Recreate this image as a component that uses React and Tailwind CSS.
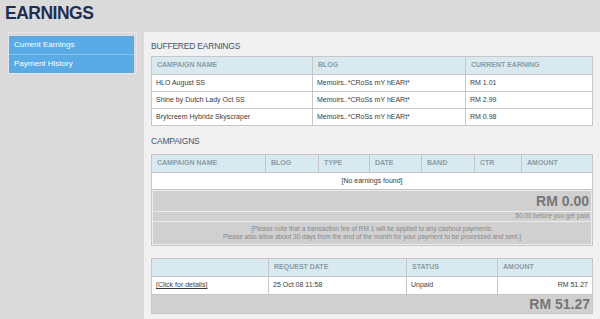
import React from "react";

const buffered = [
  { name: "HLO August SS", blog: "Memoirs..*CRoSs mY hEARt*", amount: "RM 1.01" },
  { name: "Shine by Dutch Lady Oct SS", blog: "Memoirs..*CRoSs mY hEARt*", amount: "RM 2.99" },
  { name: "Brylcreem Hybridz Skyscraper", blog: "Memoirs..*CRoSs mY hEARt*", amount: "RM 0.98" },
];

const th = "h-[18px] border border-[#c6c6c6] bg-[#d8eaf0] px-[5px] text-left align-middle text-[7px] font-bold text-[#8a9ca6]";
const td = "h-[17px] border border-[#c6c6c6] bg-white px-[4px] align-middle text-[7px] text-[#3a3a3a]";

const App = () => {
  return (
    <div className="min-h-[319px] w-[600px] bg-[#dadada] font-['Liberation_Sans',Arial,sans-serif]">
      <div className="h-[32px] px-[5px] pt-[1px]">
        <h1 className="text-[17.5px] font-bold leading-[24px] tracking-[-0.5px] text-[#1f2f52]">EARNINGS</h1>
      </div>

      <div className="flex">
        <div className="ml-[8px] mr-[7px] w-[129px] shrink-0 self-start border border-[#e6e6e6] pr-[2px] pt-[3px]">
          <div className="flex h-[18px] items-center bg-[#5aaae6] pl-[5px] text-[8px] text-white">Current Earnings</div>
          <div className="h-px bg-[#8cc4ee]"></div>
          <div className="flex h-[18px] items-center bg-[#5aaae6] pl-[5px] text-[8px] text-white">Payment History</div>
        </div>

        <div className="min-h-[287px] flex-1 bg-[#f1f1f1] pl-[7px] pr-[8px] pt-[7px]">
          <h2 className="h-[17px] text-[8.5px] leading-[14px] tracking-[-0.2px] text-[#3b5670]">BUFFERED EARNINGS</h2>
          <table className="w-[441px] table-fixed border-collapse">
            <colgroup>
              <col className="w-[161px]" />
              <col className="w-[153px]" />
              <col className="w-[127px]" />
            </colgroup>
            <thead>
              <tr>
                <th className={th}>CAMPAIGN NAME</th>
                <th className={th}>BLOG</th>
                <th className={th}>CURRENT EARNING</th>
              </tr>
            </thead>
            <tbody>
              {buffered.map((row) => (
                <tr key={row.name}>
                  <td className={td}>{row.name}</td>
                  <td className={td}>{row.blog}</td>
                  <td className={td}>{row.amount}</td>
                </tr>
              ))}
            </tbody>
          </table>

          <h2 className="mt-[7px] h-[21px] text-[8.5px] leading-[17px] tracking-[-0.2px] text-[#3b5670]">CAMPAIGNS</h2>
          <table className="w-[441px] table-fixed border-collapse">
            <colgroup>
              <col className="w-[114px]" />
              <col className="w-[53px]" />
              <col className="w-[51px]" />
              <col className="w-[52px]" />
              <col className="w-[53px]" />
              <col className="w-[47px]" />
              <col className="w-[71px]" />
            </colgroup>
            <thead>
              <tr>
                <th className={th}>CAMPAIGN NAME</th>
                <th className={th}>BLOG</th>
                <th className={th}>TYPE</th>
                <th className={th}>DATE</th>
                <th className={th}>BAND</th>
                <th className={th}>CTR</th>
                <th className={th}>AMOUNT</th>
              </tr>
            </thead>
            <tbody>
              <tr>
                <td colSpan={7} className={`${td} text-center`}>[No earnings found]</td>
              </tr>
              <tr>
                <td colSpan={7} className="border border-[#c6c6c6] bg-[#c8c8c8] p-0">
                  <div className="border border-[#ececec] bg-[#d0d0d0]">
                    <div className="flex h-[20px] items-center justify-end pr-[2px] text-[14px] font-bold leading-none text-[#777]">RM 0.00</div>
                    <div className="h-px bg-[#ececec]"></div>
                    <div className="flex h-[9px] items-center justify-end pr-[2px] text-[6.5px] leading-none text-[#888]">50.00 before you get paid</div>
                    <div className="h-px bg-[#ececec]"></div>
                    <div className="flex h-[22px] flex-col items-center justify-center text-[6.5px] leading-[8px] text-[#888]">
                      <span>[Please note that a transaction fee of RM 1 will be applied to any cashout payments.</span>
                      <span>Please also allow about 30 days from the end of the month for your payment to be processed and sent.]</span>
                    </div>
                  </div>
                </td>
              </tr>
            </tbody>
          </table>

          <table className="mt-[12px] w-[441px] table-fixed border-collapse">
            <colgroup>
              <col className="w-[117px]" />
              <col className="w-[138px]" />
              <col className="w-[91px]" />
              <col className="w-[95px]" />
            </colgroup>
            <thead>
              <tr>
                <th className={`${th} h-[17px]`}></th>
                <th className={`${th} h-[17px]`}>REQUEST DATE</th>
                <th className={`${th} h-[17px]`}>STATUS</th>
                <th className={`${th} h-[17px]`}>AMOUNT</th>
              </tr>
            </thead>
            <tbody>
              <tr>
                <td className={`${td} h-[18px]`}>
                  <span className="underline">[Click for details]</span>
                </td>
                <td className={`${td} h-[18px]`}>25 Oct 08 11:58</td>
                <td className={`${td} h-[18px]`}>Unpaid</td>
                <td className={`${td} h-[18px] text-right`}>RM 51.27</td>
              </tr>
              <tr>
                <td colSpan={4} className="h-[19px] border border-[#c6c6c6] bg-[#d0d0d0] py-0 pr-[2px] text-right align-middle text-[14px] font-bold leading-none text-[#777]">
                  RM 51.27
                </td>
              </tr>
            </tbody>
          </table>
        </div>
      </div>
    </div>
  );
};

export default App;
